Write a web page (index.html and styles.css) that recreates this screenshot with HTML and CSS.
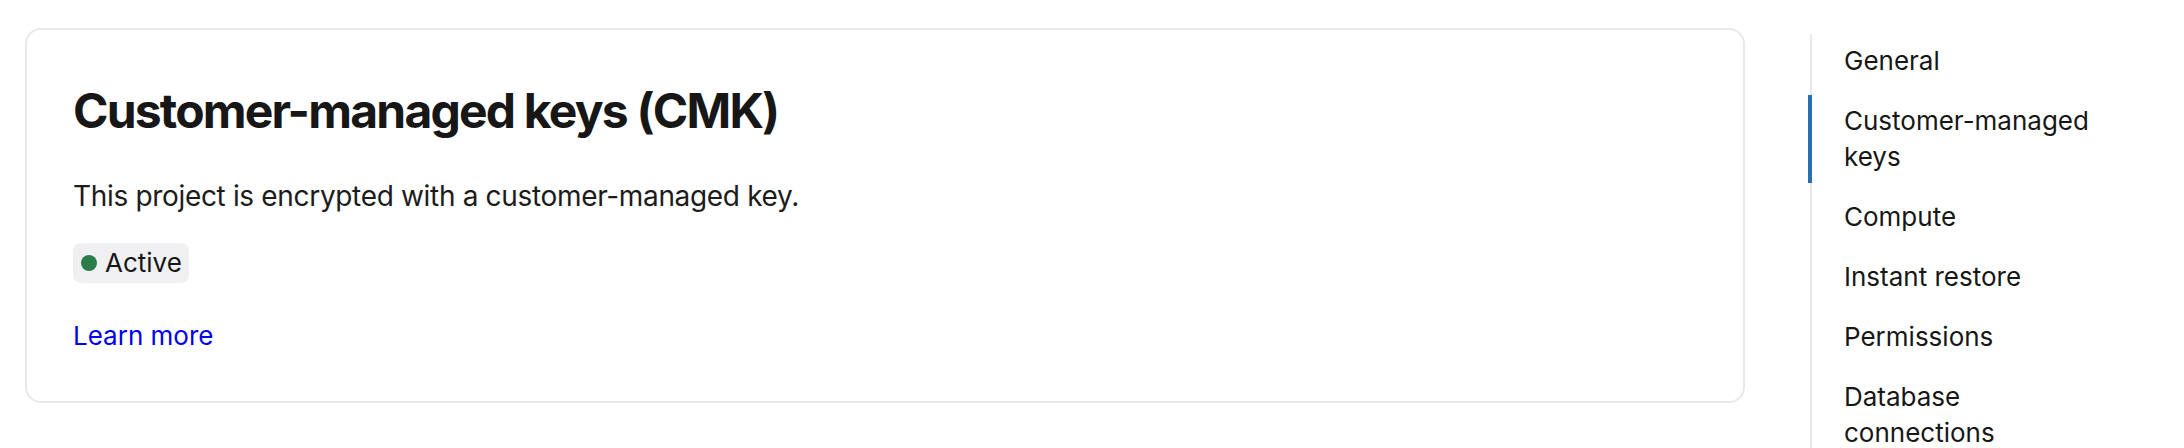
FILE: index.html
```html
<!DOCTYPE html>
<html lang="en">
<head>
<meta charset="utf-8">
<title>Customer-managed keys</title>
<link rel="stylesheet" href="styles.css">
</head>
<body>
<div class="page">
  <main class="main">
    <section class="card">
      <h1 class="card-title">Customer-managed keys (CMK)</h1>
      <p class="card-text">This project is encrypted with a customer-managed key.</p>
      <div class="badge-row">
        <span class="badge"><span class="dot"></span>Active</span>
      </div>
      <a class="link" href="#">Learn more</a>
    </section>
  </main>
  <nav class="toc">
    <a class="toc-item" href="#">General</a>
    <a class="toc-item active" href="#">Customer-managed keys</a>
    <a class="toc-item" href="#">Compute</a>
    <a class="toc-item" href="#">Instant restore</a>
    <a class="toc-item" href="#">Permissions</a>
    <a class="toc-item" href="#">Database connections</a>
  </nav>
</div>
</body>
</html>
```
FILE: styles.css
```css
* { box-sizing: border-box; }
html, body { margin: 0; padding: 0; background: #ffffff; }
body {
  font-family: Inter, "Noto Sans", "Liberation Sans", sans-serif;
  color: #171717;
  overflow: hidden;
  height: 448px;
}
.page {
  display: flex;
  align-items: flex-start;
  padding: 28px 0 0 25px;
  gap: 65px;
}
.main { width: 1720px; flex: none; }
.card {
  border: 2px solid #e8e8e8;
  border-radius: 16px;
  padding: 49px 48px 48px 46px;
  height: 375px;
  display: flex;
  flex-direction: column;
  align-items: flex-start;
}
.card-title {
  margin: 0;
  font-size: 48px;
  line-height: 64px;
  font-weight: 700;
  letter-spacing: -1.8px;
  color: #171717;
}
.card-text {
  margin: 33px 0 0;
  font-size: 28px;
  line-height: 40px;
  letter-spacing: -0.33px;
  color: #1c1c1c;
}
.badge-row { margin-top: 27px; }
.badge {
  display: inline-flex;
  align-items: center;
  gap: 8px;
  height: 40px;
  padding: 0 7px 0 8px;
  background: #f0f0f2;
  border-radius: 8px;
  font-size: 26px;
  line-height: 40px;
  color: #171717;
}
.dot {
  width: 16px;
  height: 16px;
  border-radius: 50%;
  background: #2a7d47;
  flex: none;
}
.link {
  margin-top: 35px;
  font-size: 26px;
  line-height: 36px;
  color: #0000ee;
  text-decoration: none;
}
.toc {
  margin-top: 6px;
  padding-top: 1px;
  width: 330px;
  flex: none;
  border-left: 2px solid #e8e8e8;
  display: flex;
  flex-direction: column;
  gap: 8px;
  height: 420px;
}
.toc-item {
  display: block;
  margin-left: -4px;
  border-left: 4px solid transparent;
  padding: 8px 40px 8px 32px;
  font-size: 26px;
  line-height: 36px;
  color: #171717;
  text-decoration: none;
}
.toc-item.active { border-left-color: #2a6fb4; }
```
